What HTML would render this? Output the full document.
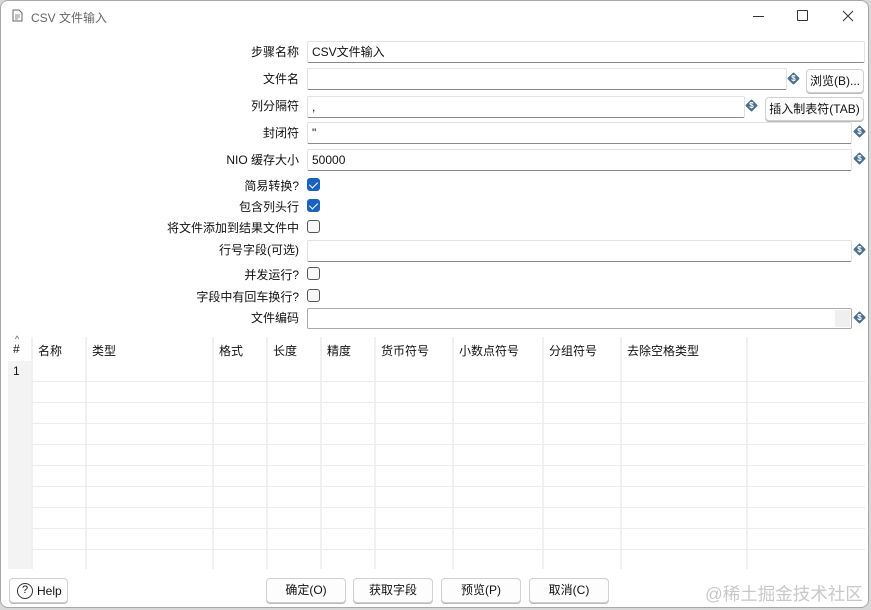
<!DOCTYPE html>
<html><head><meta charset="utf-8"><style>
*{box-sizing:border-box;margin:0;padding:0}
body{width:871px;height:610px;background:#d8d8d8;font-family:"Liberation Sans","Noto Sans CJK SC",sans-serif;font-size:12px;color:#111;overflow:hidden;position:relative}
.win{position:absolute;left:0;top:0;width:869px;height:608px;background:#fff;border:1px solid #a8a8a8;border-radius:8px;overflow:hidden}
.a{position:absolute}
.lbl{position:absolute;right:569px;text-align:right;white-space:nowrap;font-size:12px}
.in{position:absolute;left:306px;height:22px;border:1px solid #e2e2e2;border-bottom:1px solid #8a8a8a;border-radius:2px;background:#fff;padding-left:4px;line-height:21px;font-size:12px}
.dol{position:absolute;width:13px;height:13px}
.dol:before{content:"";position:absolute;left:2px;top:2px;width:9px;height:9px;background:#4a6f8f;transform:rotate(45deg);border-radius:1px}
.dol:after{content:"$";position:absolute;left:0;top:0;width:13px;height:13px;line-height:13px;text-align:center;color:#fff;font-size:8px;font-weight:bold}
.btn{position:absolute;border:1px solid #d0d0d0;border-radius:4px;background:#fdfdfd;text-align:center;font-size:12px;box-shadow:0 1px 0 #bbb}
.cb{position:absolute;left:306px;width:13px;height:13px;border:1px solid #555;border-radius:3px;background:#f8f8f8}
.cb.on{background:#1a62c0;border-color:#1a62c0}
.cb.on:after{content:"";position:absolute;left:3px;top:1px;width:4px;height:7px;border:solid #fff;border-width:0 1.5px 1.5px 0;transform:rotate(45deg)}
.vl{position:absolute;top:336px;height:232px;width:2px;background:#f0f0f0}
.hl{position:absolute;left:30px;width:834px;height:1px;background:#ececec}
.th{position:absolute;top:341px;font-size:12px}
</style></head><body><div class="win">
<svg class="a" style="left:10px;top:8px" width="14" height="14" viewBox="0 0 14 14"><path d="M2 1h6l3 3v8H2z" fill="none" stroke="#666"/><path d="M4 6h5M4 8h5M4 10h3" stroke="#888"/></svg>
<div class="a" style="left:30px;top:8px;color:#666;font-size:12px">CSV 文件输入</div>
<div class="a" style="left:752px;top:15px;width:11px;height:1px;background:#333"></div>
<div class="a" style="left:796px;top:9px;width:11px;height:11px;border:1px solid #333;border-radius:1px"></div>
<svg class="a" style="left:841px;top:9px" width="12" height="12"><path d="M1 1L11 11M11 1L1 11" stroke="#333"/></svg>

<div class="lbl" style="top:42px">步骤名称</div><div class="in" style="top:40px;width:558px">CSV文件输入</div>
<div class="lbl" style="top:69px">文件名</div><div class="in" style="top:67px;width:480px"></div>
<div class="dol" style="left:786px;top:71px"></div><div class="btn" style="left:805px;top:68px;width:58px;height:24px;line-height:22px">浏览(B)...</div>
<div class="lbl" style="top:96px">列分隔符</div><div class="in" style="top:95px;width:438px">,</div>
<div class="dol" style="left:744px;top:98px"></div><div class="btn" style="left:764px;top:96px;width:99px;height:24px;line-height:22px">插入制表符(TAB)</div>
<div class="lbl" style="top:123px">封闭符</div><div class="in" style="top:121px;width:545px">"</div><div class="dol" style="left:852px;top:124px"></div>
<div class="lbl" style="top:150px">NIO 缓存大小</div><div class="in" style="top:148px;width:545px">50000</div><div class="dol" style="left:852px;top:151px"></div>
<div class="lbl" style="top:176px">简易转换?</div><div class="cb on" style="top:177px"></div>
<div class="lbl" style="top:197px">包含列头行</div><div class="cb on" style="top:198px"></div>
<div class="lbl" style="top:218px">将文件添加到结果文件中</div><div class="cb" style="top:219px"></div>
<div class="lbl" style="top:240px">行号字段(可选)</div><div class="in" style="top:239px;width:545px"></div><div class="dol" style="left:852px;top:242px"></div>
<div class="lbl" style="top:265px">并发运行?</div><div class="cb" style="top:266px"></div>
<div class="lbl" style="top:287px">字段中有回车换行?</div><div class="cb" style="top:288px"></div>
<div class="lbl" style="top:308px">文件编码</div><div class="in" style="top:307px;width:545px;height:21px;border:1px solid #aaa"></div>
<div class="a" style="left:834px;top:309px;width:15px;height:17px;background:#efefef"></div><div class="dol" style="left:852px;top:310px"></div>

<div class="a" style="left:7px;top:360px;width:23px;height:208px;background:#f3f3f3"></div>
<div class="a" style="left:14px;top:333px;font-size:9px;color:#555">^</div>
<div class="th" style="left:12px">#</div>
<div class="a" style="left:12px;top:363px">1</div>
<div class="vl" style="left:30px"></div><div class="vl" style="left:84px"></div><div class="vl" style="left:211px"></div><div class="vl" style="left:265px"></div><div class="vl" style="left:319px"></div><div class="vl" style="left:373px"></div><div class="vl" style="left:451px"></div><div class="vl" style="left:541px"></div><div class="vl" style="left:619px"></div><div class="vl" style="left:745px"></div>
<div class="th" style="left:37px">名称</div><div class="th" style="left:91px">类型</div><div class="th" style="left:218px">格式</div><div class="th" style="left:272px">长度</div><div class="th" style="left:326px">精度</div><div class="th" style="left:380px">货币符号</div><div class="th" style="left:458px">小数点符号</div><div class="th" style="left:548px">分组符号</div><div class="th" style="left:626px">去除空格类型</div>
<div class="hl" style="top:380px"></div><div class="hl" style="top:401px"></div><div class="hl" style="top:422px"></div><div class="hl" style="top:443px"></div><div class="hl" style="top:464px"></div><div class="hl" style="top:485px"></div><div class="hl" style="top:506px"></div><div class="hl" style="top:527px"></div><div class="hl" style="top:548px"></div>

<div class="btn" style="left:8px;top:577px;width:59px;height:25px;display:flex;align-items:center;padding-left:7px;gap:4px"><span style="display:inline-block;width:16px;height:16px;border:1.5px solid #333;border-radius:50%;font-size:11px;line-height:13px;text-align:center">?</span><span>Help</span></div>
<div class="btn" style="left:265px;top:577px;width:80px;height:25px;line-height:23px">确定(O)</div>
<div class="btn" style="left:352px;top:577px;width:80px;height:25px;line-height:23px">获取字段</div>
<div class="btn" style="left:440px;top:577px;width:80px;height:25px;line-height:23px">预览(P)</div>
<div class="btn" style="left:528px;top:577px;width:80px;height:25px;line-height:23px">取消(C)</div>
<div class="a" style="left:704px;top:580px;font-size:17.5px;color:#c8c8c8">@稀土掘金技术社区</div>
</div></body></html>
